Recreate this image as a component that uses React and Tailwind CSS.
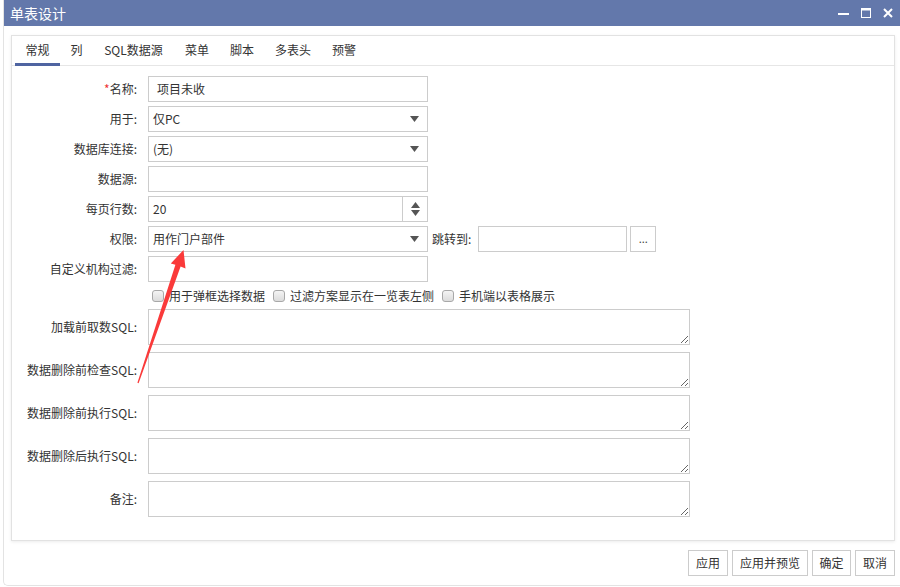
import React from "react";

function Caret() {
  return (
    <svg width="9" height="6" viewBox="0 0 9 6" className="shrink-0">
      <path d="M0 0 H9 L4.5 6 Z" fill="#555" />
    </svg>
  );
}

function Row({ label, required, children }) {
  return (
    <div className="flex items-center h-[26px]">
      <div className="w-[125px] text-right text-[12px] leading-[16px] text-[#333] whitespace-nowrap">
        {required && <span className="text-[#e33]">*</span>}
        {label}:
      </div>
      <div className="ml-[11px] flex items-center h-full">{children}</div>
    </div>
  );
}

function TextInput({ value, w = "w-[280px]" }) {
  return (
    <div className={`${w} h-[26px] border border-[#cccccc] bg-white flex items-center pl-[8px] text-[12px] text-[#333]`}>
      {value}
    </div>
  );
}

function Select({ value }) {
  return (
    <div className="w-[280px] h-[26px] border border-[#cccccc] bg-white flex items-center pl-[4px] pr-[8px] text-[12px] text-[#333]">
      <span>{value}</span>
      <span className="ml-auto">
        <Caret />
      </span>
    </div>
  );
}

function Check({ label }) {
  return (
    <div className="flex items-center">
      <span className="w-[12px] h-[12px] rounded-[3px] border border-[#a8a8a8] bg-gradient-to-b from-[#f4f4f4] to-[#dcdcdc]" />
      <span className="ml-[5px] text-[12px] text-[#333]">{label}</span>
    </div>
  );
}

function AreaRow({ label }) {
  return (
    <div className="flex items-center h-[36px]">
      <div className="w-[125px] text-right text-[12px] text-[#333] whitespace-nowrap">{label}:</div>
      <textarea className="ml-[11px] w-[542px] h-[36px] border border-[#cccccc] bg-white outline-none resize-y" />
    </div>
  );
}

const tabs = [
  ["常规", "w-[45px]"],
  ["列", "w-[33px]"],
  ["SQL数据源", "w-[81px]"],
  ["菜单", "w-[46px]"],
  ["脚本", "w-[44px]"],
  ["多表头", "w-[58px]"],
  ["预警", "w-[44px]"],
];

function Btn({ children, w }) {
  return (
    <div className={`${w} h-[26px] border border-[#cccccc] bg-white flex items-center justify-center text-[12px] text-[#333]`}>
      {children}
    </div>
  );
}

export default function App() {
  return (
    <div className="relative w-[900px] h-[587px] bg-white overflow-hidden font-['Noto_Sans_CJK_SC','Liberation_Sans',sans-serif] text-[#333]">
      <div className="ml-[3px] h-[586px] flex flex-col border-l border-b border-[#e3e3e3] rounded-bl-[5px]">
        {/* title bar */}
        <div className="h-[26px] bg-[#6378ab] flex items-center pl-[6px] pr-[7px] text-white shrink-0">
          <span className="text-[14px] leading-none">单表设计</span>
          <div className="ml-auto flex items-center gap-[12px]">
            <svg width="11" height="10" viewBox="0 0 11 10">
              <rect x="0" y="5" width="11" height="2" fill="#fff" />
            </svg>
            <svg width="10" height="10" viewBox="0 0 10 10">
              <rect x="0.5" y="0.5" width="9" height="9" fill="none" stroke="#fff" strokeWidth="1" />
              <rect x="0" y="0" width="10" height="2.5" fill="#fff" />
            </svg>
            <svg width="10" height="10" viewBox="0 0 10 10">
              <path d="M1 1 L9 9 M9 1 L1 9" stroke="#fff" strokeWidth="2" />
            </svg>
          </div>
        </div>

        {/* body */}
        <div className="pl-[7px] pt-[9px]">
          <div className="w-[884px] h-[506px] border border-[#e2e2e2] shadow-[0_1px_3px_rgba(0,0,0,0.08)] bg-white">
            {/* tabs */}
            <div className="h-[30px] pl-[3px] flex border-b border-[#e6e6e6]">
              {tabs.map(([t, w], i) => (
                <div
                  key={t}
                  className={`${w} h-[30px] -mb-px flex items-center justify-center text-[12px] text-[#333] border-b-[3px] ${
                    i === 0 ? "border-[#4f64a1]" : "border-transparent"
                  }`}
                >
                  {t}
                </div>
              ))}
            </div>

            {/* form */}
            <div className="pt-[10px] flex flex-col">
              <div className="flex flex-col gap-[4px]">
                <Row label="名称" required>
                  <TextInput value="项目未收" />
                </Row>
                <Row label="用于">
                  <Select value="仅PC" />
                </Row>
                <Row label="数据库连接">
                  <Select value="(无)" />
                </Row>
                <Row label="数据源">
                  <TextInput value="" />
                </Row>
                <Row label="每页行数">
                  <div className="w-[280px] h-[26px] border border-[#cccccc] bg-white flex items-center text-[12px] text-[#333]">
                    <span className="pl-[4px]">20</span>
                    <div className="ml-auto w-[25px] h-full border-l border-[#cccccc] flex flex-col items-center justify-center gap-[2px]">
                      <svg width="9" height="6" viewBox="0 0 9 6">
                        <path d="M0 6 H9 L4.5 0 Z" fill="#555" />
                      </svg>
                      <svg width="9" height="6" viewBox="0 0 9 6">
                        <path d="M0 0 H9 L4.5 6 Z" fill="#555" />
                      </svg>
                    </div>
                  </div>
                </Row>
                <Row label="权限">
                  <Select value="用作门户部件" />
                  <span className="ml-[4px] text-[12px] text-[#333] whitespace-nowrap">跳转到:</span>
                  <div className="ml-[7px] w-[149px] h-[26px] border border-[#cccccc] bg-white" />
                  <div className="ml-[3px] w-[26px] h-[26px] border border-[#cccccc] bg-white flex items-center justify-center text-[11px] text-[#444] leading-none pb-[2px]">
                    ...
                  </div>
                </Row>
                <Row label="自定义机构过滤">
                  <TextInput value="" />
                </Row>
              </div>

              <div className="mt-[3px] h-[22px] pl-[140px] flex items-center gap-[8px]">
                <Check label="用于弹框选择数据" />
                <Check label="过滤方案显示在一览表左侧" />
                <Check label="手机端以表格展示" />
              </div>

              <div className="mt-[2px] flex flex-col gap-[7px]">
                <AreaRow label="加载前取数SQL" />
                <AreaRow label="数据删除前检查SQL" />
                <AreaRow label="数据删除前执行SQL" />
                <AreaRow label="数据删除后执行SQL" />
                <AreaRow label="备注" />
              </div>
            </div>
          </div>

          {/* buttons */}
          <div className="w-[884px] mt-[9px] flex justify-end gap-[4px]">
            <Btn w="w-[40px]">应用</Btn>
            <Btn w="w-[76px]">应用并预览</Btn>
            <Btn w="w-[39px]">确定</Btn>
            <Btn w="w-[40px]">取消</Btn>
          </div>
        </div>
      </div>

      {/* annotation arrow */}
      <svg
        className="absolute left-0 top-0 pointer-events-none"
        width="900"
        height="587"
        viewBox="0 0 900 587"
      >
        <polygon
          points="183.5,250 185.5,268.5 180.6,266.6 138.6,383.2 137.4,382.8 175.4,264.8 170.8,263.5"
          fill="#fa3a3a"
        />
      </svg>
    </div>
  );
}
